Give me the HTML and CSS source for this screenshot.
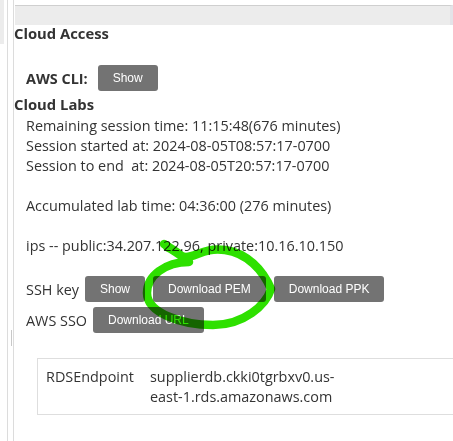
FILE: index.html
```html
<!DOCTYPE html>
<html>
<head>
<meta charset="utf-8">
<link rel="stylesheet" href="styles.css">
</head>
<body>
<div class="page">
  <div class="rail"><div class="rail-block"></div></div>
  <div class="gutter"><div class="gutter-mark"></div></div>
  <main class="main">
    <div class="topbar"></div>
    <h2 class="heading first">Cloud Access</h2>
    <div class="row cli-row">
      <span class="label-bold">AWS CLI:</span>
      <button class="btn">Show</button>
    </div>
    <h2 class="heading labs">Cloud Labs</h2>
    <div class="info">
      <div class="line">Remaining session time: 11:15:48(676 minutes)</div>
      <div class="line">Session started at: 2024-08-05T08:57:17-0700</div>
      <div class="line">Session to end&nbsp; at: 2024-08-05T20:57:17-0700</div>
      <div class="line blank"></div>
      <div class="line">Accumulated lab time: 04:36:00 (276 minutes)</div>
      <div class="line blank"></div>
      <div class="line">ips -- public:34.207.122.96, private:10.16.10.150</div>
    </div>
    <div class="row ssh-row">
      <span class="label">SSH key</span>
      <button class="btn">Show</button>
      <button class="btn">Download PEM</button>
      <button class="btn">Download PPK</button>
    </div>
    <div class="row sso-row">
      <span class="label">AWS SSO</span>
      <button class="btn">Download URL</button>
    </div>
    <table class="endpoints">
      <tr>
        <td class="key">RDSEndpoint</td>
        <td class="val">supplierdb.ckki0tgrbxv0.us-<br>east-1.rds.amazonaws.com</td>
      </tr>
    </table>
  </main>
</div>
<svg class="scribble" width="453" height="441" viewBox="0 0 453 441">
  <path d="M164 244 C171 248 180 254 189 262 C165 262 147 276 147 293 C147 313 182 325 213 325 C244 325 266 305 271 289 C263 270 247 253 225 250 C205 247 196 257 186 257 C179 257 175 250 167 247" fill="none" stroke="#2ee000" stroke-width="8.5" stroke-linecap="round" stroke-linejoin="round"/>
</svg>
</body>
</html>
```
FILE: styles.css
```css
html, body {
  margin: 0;
  padding: 0;
  background: #fff;
}
body {
  font-family: "Open Sans", "DejaVu Sans", sans-serif;
  color: #333;
  width: 453px;
  height: 441px;
  overflow: hidden;
  position: relative;
}
.page {
  display: flex;
  min-height: 441px;
}
.rail {
  width: 7px;
  border-right: 1px solid #dcdcdc;
  flex: none;
}
.rail-block {
  width: 4px;
  height: 44px;
  background: #ececec;
}
.gutter {
  width: 5px;
  border-right: 1px solid #dcdcdc;
  flex: none;
  position: relative;
}
.gutter-mark {
  position: absolute;
  left: 3px;
  top: 330px;
  width: 1px;
  height: 16px;
  background: #c8c8c8;
}
.main {
  flex: 1;
  padding-top: 5px;
}
.topbar {
  height: 19px;
  background: #ececec;
  border-top: 1px solid #cfcfcf;
  border-right: 3px solid #e3e3e8;
  margin-left: 1px;
}
.heading {
  font-size: 14.8px;
  font-weight: 700;
  margin: 0;
  line-height: 20px;
  color: #333;
}
.first {
  margin-top: -2px;
}
.row {
  display: flex;
  align-items: center;
  gap: 8px;
  padding-left: 12px;
}
.cli-row {
  margin-top: 22px;
  gap: 10px;
}
.label-bold {
  font-weight: 700;
  font-size: 14.4px;
}
.label {
  font-size: 14.4px;
  margin-right: -2px;
}
.btn {
  font-family: "Liberation Sans", Arial, sans-serif;
  font-size: 12px;
  color: #fff;
  background: #737373;
  border: none;
  border-radius: 3px;
  height: 26px;
  padding: 0 15px;
  margin: 0;
}
.labs {
  margin-top: 3px;
}
.info {
  padding-left: 12px;
  font-size: 14.4px;
  line-height: 20px;
  margin-top: 2px;
}
.blank {
  height: 20px;
}
.ssh-row {
  margin-top: 20px;
}
.sso-row {
  margin-top: 5px;
}
.endpoints {
  margin-top: 25px;
  margin-left: 23px;
  width: calc(100% - 23px);
  border: 1px solid #dedede;
  border-right: none;
  border-collapse: collapse;
  font-size: 14.4px;
  line-height: 20px;
}
.endpoints td {
  vertical-align: top;
  padding: 8px 0 7px 0;
}
.endpoints .key {
  padding-left: 8px;
  width: 104px;
}
.scribble {
  position: absolute;
  left: 0;
  top: 0;
  pointer-events: none;
  mix-blend-mode: multiply;
}
```
